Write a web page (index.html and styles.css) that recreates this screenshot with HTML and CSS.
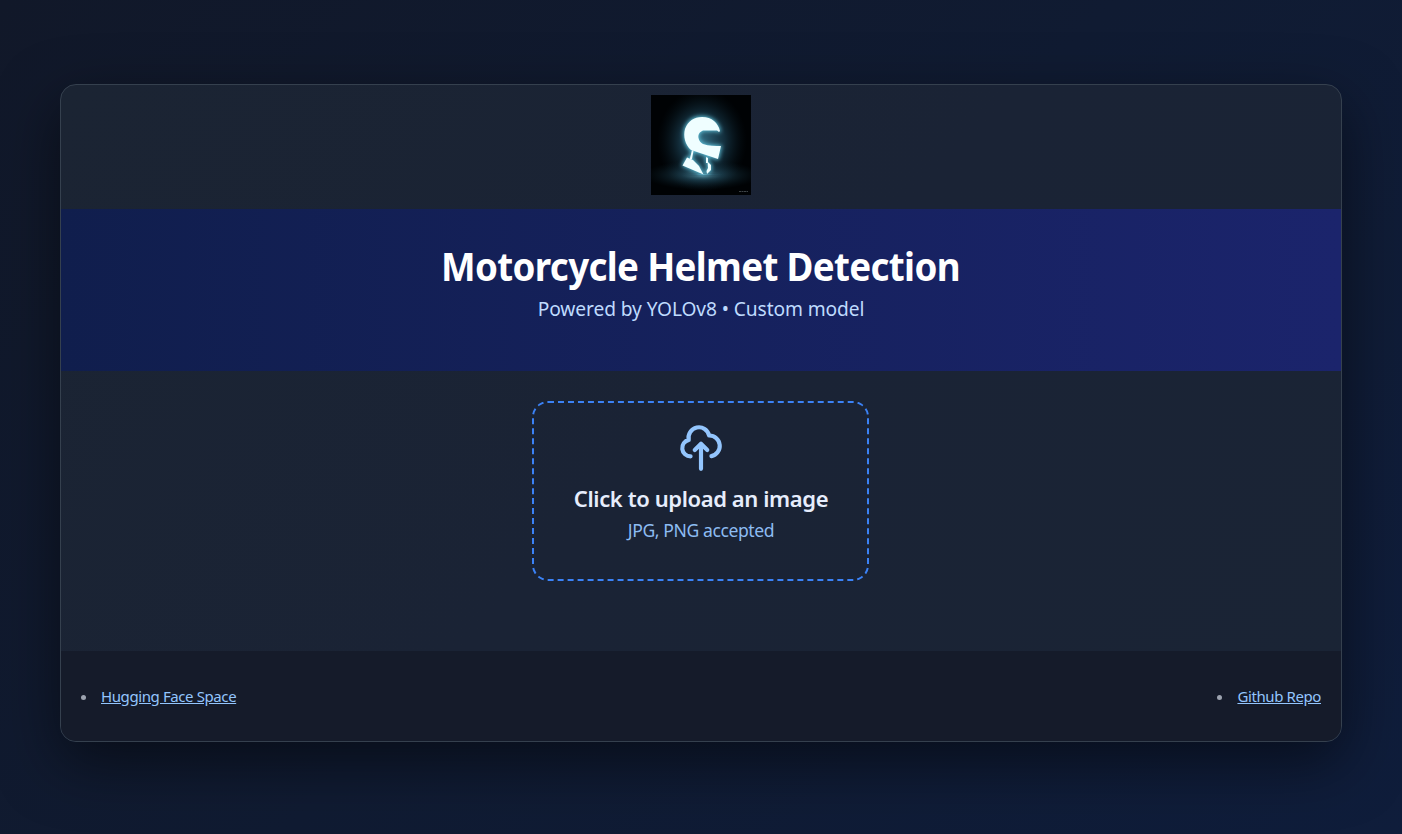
FILE: index.html
```
<!DOCTYPE html>
<html lang="en">
<head>
<meta charset="utf-8">
<title>Motorcycle Helmet Detection</title>
<link rel="stylesheet" href="styles.css">
</head>
<body>
<main class="card">
  <div class="brand">
    <svg class="logo" viewBox="0 0 100 100" role="img" aria-label="Helmet logo">
      <defs>
        <radialGradient id="halo"><stop offset="0" stop-color="#347087" stop-opacity=".95"/><stop offset=".5" stop-color="#1b4154" stop-opacity=".7"/><stop offset="1" stop-color="#071721" stop-opacity="0"/></radialGradient>
        <radialGradient id="floor"><stop offset="0" stop-color="#6bb1c5" stop-opacity=".7"/><stop offset=".35" stop-color="#2b5e74" stop-opacity=".5"/><stop offset="1" stop-color="#0b2532" stop-opacity="0"/></radialGradient>
        <filter id="glow" x="-50%" y="-50%" width="200%" height="200%"><feGaussianBlur stdDeviation="2.2"/></filter>
        <g id="helmet">
          <path d="M40 55C34 50 32 41 34 34C37 26 43 22 51 22C61 22 67 28 69 36L68 37L66 35.500L52 35.500C48 37 47 40 47.500 43C48 46 50 48 52 49C58 51 64 51 70 51L67 64Z"/>
          <path d="M36 62.500L42 65L48 71L52.500 79.500L31.500 70.500Z"/>
          <path d="M56.500 66.500L60 70L60 75L56 79L55.500 76L57 73Z"/>
          <path d="M41 55L42.500 56L41 64L38.500 65ZM55 62L57 63L57 68L55 68Z"/>
        </g>
      </defs>
      <rect width="100" height="100" fill="#000204"/>
      <ellipse cx="51" cy="46" rx="45" ry="52" fill="url(#halo)"/>
      <ellipse cx="51" cy="80" rx="58" ry="15" fill="url(#floor)"/>
      <ellipse cx="53" cy="79.500" rx="23" ry="2" fill="url(#floor)"/>
      <use href="#helmet" fill="#62c6df" stroke="#62c6df" stroke-width="1.500" filter="url(#glow)"/>
      <use href="#helmet" fill="#effeff"/>
      <path d="M88 96.500h9" stroke="#3d4347" stroke-width="1" stroke-dasharray="2 .5"/>
    </svg>
  </div>
  <header class="banner">
    <h1 class="title">Motorcycle Helmet Detection</h1>
    <p class="subtitle">Powered by YOLOv8 • Custom model</p>
  </header>
  <section class="content">
    <label class="upload">
      <svg class="upload-icon" viewBox="0 0 24 24" fill="none" stroke="currentColor" stroke-width="2" stroke-linecap="round" stroke-linejoin="round"><path d="M7 16a4 4 0 01-.88-7.903A5 5 0 1115.9 6L16 6a5 5 0 011 9.900M15 13l-3-3m0 0l-3 3m3-3v12"/></svg>
      <span class="upload-title">Click to upload an image</span>
      <span class="upload-hint">JPG, PNG accepted</span>
    </label>
  </section>
  <footer class="footer">
    <div class="item"><span class="dot"></span><a class="link" href="#">Hugging Face Space</a></div>
    <div class="item"><span class="dot"></span><a class="link" href="#">Github Repo</a></div>
  </footer>
</main>
</body>
</html>
```
FILE: styles.css
```
* { box-sizing: border-box; }
body {
  margin: 0;
  height: 834px;
  padding: 84px 60px 92px;
  font-family: "Segoe UI", "Noto Sans", "Open Sans", sans-serif;
  background: linear-gradient(135deg, #111829 0%, #101b32 50%, #0f1d3b 100%);
}
.card {
  display: flex;
  flex-direction: column;
  height: 658px;
  border: 1px solid #35404e;
  border-radius: 16px;
  overflow: hidden;
  background: linear-gradient(135deg, #1b2433, #1a2335 50%, #1a2435);
  box-shadow: 0 20px 60px rgba(0, 0, 0, .5);
}
.brand { height: 124px; padding-top: 10px; text-align: center; }
.logo { width: 100px; height: 100px; }
.banner {
  height: 162px;
  padding-top: 30px;
  text-align: center;
  background: linear-gradient(90deg, #101e4d, #1b246c);
}
.title {
  margin: 0;
  font-size: 39px;
  font-weight: 700;
  line-height: 54px;
  letter-spacing: -.700px;
  color: #fff;
  white-space: nowrap;
  transform: translateX(-.5px) scaleX(.941);
}
.subtitle { margin: 2px 0 0; font-size: 19.200px; line-height: 28px; letter-spacing: -.1px; color: #bfdbfe; }
.content { display: flex; justify-content: center; height: 280px; padding: 30px 1px 0 0; }
.upload {
  display: flex;
  flex-direction: column;
  align-items: center;
  width: 337px;
  height: 180px;
  padding: 20px 0 0 1px;
  border: 2px dashed #3b82f6;
  border-radius: 16px;
}
.upload-icon { width: 50px; height: 50px; color: #93c5fd; }
.upload-title { margin-top: 9px; font-size: 22px; font-weight: 600; line-height: 32px; letter-spacing: -.4px; color: #e6edfc; white-space: nowrap; }
.upload-hint { margin-top: 4px; font-size: 17.600px; line-height: 24px; letter-spacing: -.42px; color: #8dbcf2; white-space: nowrap; }
.footer {
  display: flex;
  flex: 1;
  justify-content: space-between;
  padding: 34px 20px 0;
  background: #151b2a;
}
.item { display: flex; align-items: flex-start; }
.dot { width: 5px; height: 5px; margin: 10px 15px 0 0; border-radius: 50%; background: #9ca3af; }
.link { font-size: 15px; line-height: 22px; letter-spacing: -.4px; color: #93c5fd; white-space: nowrap; }
```
